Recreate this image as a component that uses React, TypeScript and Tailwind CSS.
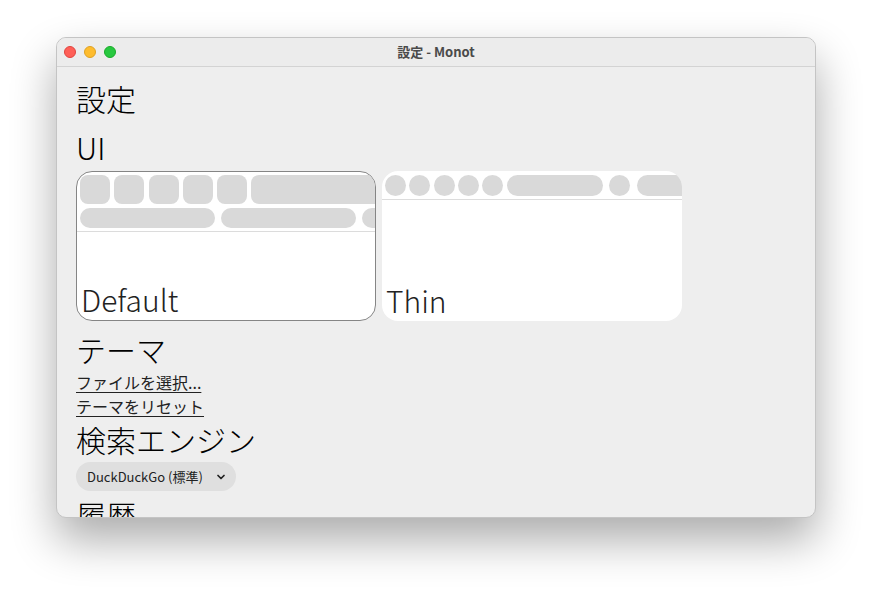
import { ChevronDown } from "lucide-react";

const JP = "font-['Noto_Sans_CJK_JP','Noto_Sans',sans-serif]";

const DEFAULT_SQUARES = [0, 1, 2, 3, 4];
const THIN_CIRCLES = [0, 1, 2, 3, 4];

function DefaultPreview() {
  return (
    <div className="w-[300px] h-[150px] shrink-0 rounded-[16px] border border-[#858585] bg-white overflow-hidden flex flex-col">
      <div className="pt-[3px] pl-[3px] flex flex-col gap-[4px]">
        <div className="flex gap-[4.25px]">
          {DEFAULT_SQUARES.map((i) => (
            <div key={i} className="w-[30px] h-[29px] shrink-0 rounded-[8px] bg-[#d9d9d9]" />
          ))}
          <div className="w-[160px] h-[29px] shrink-0 rounded-[8px] bg-[#d9d9d9]" />
        </div>
        <div className="flex gap-[6px]">
          <div className="w-[135px] h-[20px] shrink-0 rounded-full bg-[#d9d9d9]" />
          <div className="w-[135px] h-[20px] shrink-0 rounded-full bg-[#d9d9d9]" />
          <div className="w-[135px] h-[20px] shrink-0 rounded-full bg-[#d9d9d9]" />
        </div>
      </div>
      <div className="mt-[3px] h-px bg-[#dcdcdc]" />
      <p className={`mt-auto pb-[6px] pl-[4px] text-[30px] leading-none font-light text-[#222] ${JP}`}>Default</p>
    </div>
  );
}

function ThinPreview() {
  return (
    <div className="w-[300px] h-[150px] shrink-0 rounded-[16px] bg-white overflow-hidden flex flex-col">
      <div className="pt-[3.5px] pl-[3px] flex items-center">
        <div className="flex gap-[3.3px]">
          {THIN_CIRCLES.map((i) => (
            <div key={i} className="w-[21px] h-[21px] shrink-0 rounded-full bg-[#d9d9d9]" />
          ))}
        </div>
        <div className="ml-[4px] w-[96px] h-[21px] shrink-0 rounded-full bg-[#d9d9d9]" />
        <div className="ml-[6px] w-[21px] h-[21px] shrink-0 rounded-full bg-[#d9d9d9]" />
        <div className="ml-[7px] w-[80px] h-[21px] shrink-0 rounded-full bg-[#d9d9d9]" />
      </div>
      <div className="mt-[3.5px] h-px bg-[#dcdcdc]" />
      <p className={`mt-auto pb-[6px] pl-[4px] text-[30px] leading-none font-light text-[#222] ${JP}`}>Thin</p>
    </div>
  );
}

export default function App() {
  return (
    <div className="w-[872px] h-[592px] bg-white pt-[37px] pl-[56px]">
      <div className="w-[760px] h-[481px] rounded-[10px] overflow-hidden bg-[#eeeeee] border border-[#c4c4c4] shadow-[0_22px_45px_rgba(0,0,0,0.33)] flex flex-col">
        <div className="relative h-[29px] shrink-0 bg-[#ececec] border-b border-[#d3d3d3] flex items-center justify-center">
          <div className="absolute left-[7px] top-[8px] flex gap-[8px]">
            <span className="w-[12px] h-[12px] rounded-full bg-[#fe5f57] border border-[#e0443e]" />
            <span className="w-[12px] h-[12px] rounded-full bg-[#febc2e] border border-[#dea123]" />
            <span className="w-[12px] h-[12px] rounded-full bg-[#28c840] border border-[#1aab29]" />
          </div>
          <p className={`text-[13px] font-bold text-[#4a4a4a] ${JP}`}>設定 - Monot</p>
        </div>

        <div className={`pl-[19px] pt-[13px] text-black ${JP}`}>
          <h1 className="text-[30px] leading-[36px] font-light">設定</h1>
          <h2 className="mt-[13px] text-[30px] leading-[36px] font-light">UI</h2>
          <div className="mt-[6px] flex gap-[6px]">
            <DefaultPreview />
            <ThinPreview />
          </div>
          <h2 className="mt-[10px] text-[30px] leading-[36px] font-light">テーマ</h2>
          <div className="mt-[3px] flex flex-col items-start text-[16px] leading-[24px] text-[#222]">
            <a className="underline underline-offset-[3px]">ファイルを選択...</a>
            <a className="underline underline-offset-[3px]">テーマをリセット</a>
          </div>
          <h2 className="mt-[3px] text-[30px] leading-[36px] font-light">検索エンジン</h2>
          <div className="mt-[5px] w-[160px] h-[29px] rounded-full bg-[#dfdfdf] flex items-center pl-[11px] pr-[9px]">
            <span className="text-[13px] text-[#222] flex-1">DuckDuckGo (標準)</span>
            <ChevronDown size={12} strokeWidth={3.5} className="text-[#222]" />
          </div>
          <h2 className="mt-[5px] text-[30px] leading-[36px] font-light">履歴</h2>
        </div>
      </div>
    </div>
  );
}
